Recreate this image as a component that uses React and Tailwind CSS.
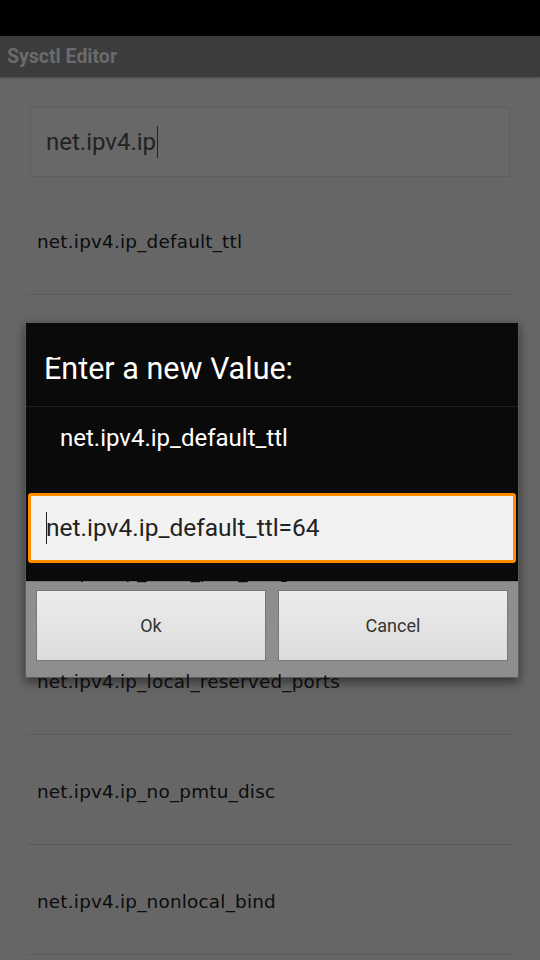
const ITEMS = [
  'net.ipv4.ip_default_ttl',
  'net.ipv4.ip_dynaddr',
  'net.ipv4.ip_forward',
  'net.ipv4.ip_local_port_range',
  'net.ipv4.ip_local_reserved_ports',
  'net.ipv4.ip_no_pmtu_disc',
  'net.ipv4.ip_nonlocal_bind',
];

export default function App() {
  return (
    <div className="relative h-[960px] w-[540px] overflow-hidden bg-[#666666] font-['Roboto',sans-serif]">
      <div className="h-9 bg-black" />
      <div className="flex h-[41px] items-center bg-[#3c3c3c] px-[7px] shadow-[0_1px_2px_rgba(0,0,0,0.3)]">
        <span className="text-[19.5px] font-bold text-[#6b6b6b]">Sysctl Editor</span>
      </div>

      <div className="px-[30px] pt-[30px]">
        <div className="flex h-[70px] items-center border border-[#5e5e5e] bg-[#686868] px-[15px]">
          <span className="text-[24px] text-[#222]">net.ipv4.ip</span>
          <span className="ml-px h-[32px] w-px bg-[#222]" />
        </div>
      </div>

      <ul className="mt-2 px-[27px]">
        {ITEMS.map((item) => (
          <li key={item} className="flex h-[110px] items-center border-b border-[#5a5a5a] px-[10px] pt-[5px]">
            <span className="relative z-20 font-['DejaVu_Sans',sans-serif] text-[18.4px] tracking-[0.2px] text-[#0c0c0c]">
              {item}
            </span>
          </li>
        ))}
      </ul>

      <div className="absolute left-[25px] top-[322px] z-10 w-[494px] border border-[#5c5c5c] shadow-[0_4px_10px_rgba(0,0,0,0.5)]">
        <div className="bg-[#0a0a0a]">
          <div className="flex h-[84px] items-center border-b border-[#222] px-[18px] pt-[8px]">
            <span className="text-[30.5px] text-white">Enter a new Value:</span>
          </div>
          <div className="flex h-[62px] items-center px-[34px]">
            <span className="text-[24px] text-white">net.ipv4.ip_default_ttl</span>
          </div>
          <div className="px-[2px] pb-[18px] pt-[24px]">
            <div className="flex h-[70px] items-center rounded-[3px] border-[3px] border-[#ff8c00] bg-[#f2f2f2] px-[15px]">
              <span className="-mr-px h-[32px] w-px bg-[#222]" />
              <span className="text-[24.5px] text-[#222]">net.ipv4.ip_default_ttl=64</span>
            </div>
          </div>
        </div>
        <div className="flex gap-[12px] border-t border-[#777] bg-[#8e8e8e] px-[10px] pb-[16px] pt-[8px]">
          <button className="h-[71px] flex-1 border border-[#777] bg-gradient-to-b from-[#ececec] to-[#dcdcdc] text-[18px] text-[#333]">
            Ok
          </button>
          <button className="h-[71px] flex-1 border border-[#777] bg-gradient-to-b from-[#ececec] to-[#dcdcdc] text-[18px] text-[#333]">
            Cancel
          </button>
        </div>
      </div>
    </div>
  );
}
